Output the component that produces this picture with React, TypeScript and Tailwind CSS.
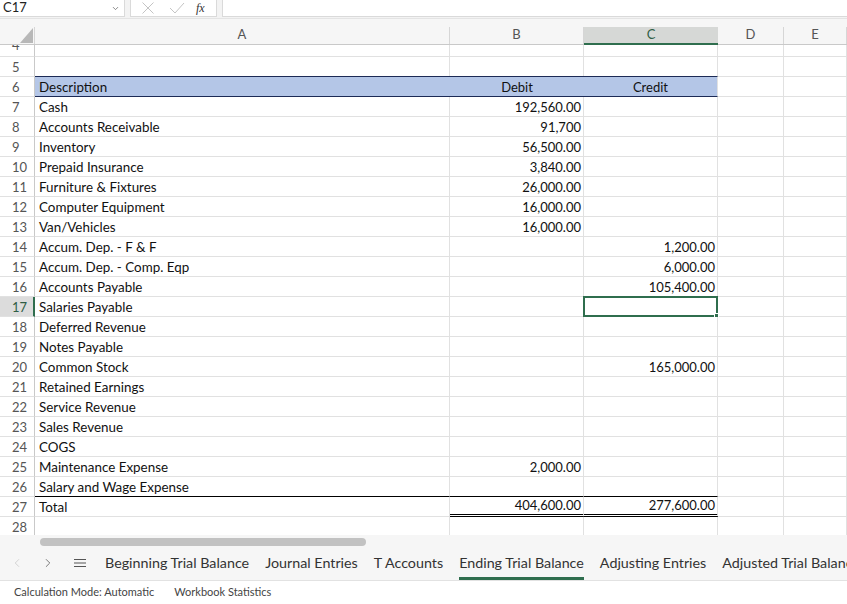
import { ChevronDown, ChevronLeft, ChevronRight } from "lucide-react";

type Row = { n: number; a?: string; b?: string; c?: string };

const rows: Row[] = [
  { n: 7, a: "Cash", b: "192,560.00" },
  { n: 8, a: "Accounts Receivable", b: "91,700" },
  { n: 9, a: "Inventory", b: "56,500.00" },
  { n: 10, a: "Prepaid Insurance", b: "3,840.00" },
  { n: 11, a: "Furniture & Fixtures", b: "26,000.00" },
  { n: 12, a: "Computer Equipment", b: "16,000.00" },
  { n: 13, a: "Van/Vehicles", b: "16,000.00" },
  { n: 14, a: "Accum. Dep. - F & F", c: "1,200.00" },
  { n: 15, a: "Accum. Dep. - Comp. Eqp", c: "6,000.00" },
  { n: 16, a: "Accounts Payable", c: "105,400.00" },
  { n: 17, a: "Salaries Payable" },
  { n: 18, a: "Deferred Revenue" },
  { n: 19, a: "Notes Payable" },
  { n: 20, a: "Common Stock", c: "165,000.00" },
  { n: 21, a: "Retained Earnings" },
  { n: 22, a: "Service Revenue" },
  { n: 23, a: "Sales Revenue" },
  { n: 24, a: "COGS" },
  { n: 25, a: "Maintenance Expense", b: "2,000.00" },
  { n: 26, a: "Salary and Wage Expense" },
];

const tabs = [
  "Beginning Trial Balance",
  "Journal Entries",
  "T Accounts",
  "Ending Trial Balance",
  "Adjusting Entries",
  "Adjusted Trial Balance",
];

const grid = "border-r border-b border-[#e1e1e1]";

function RowHead({ n, active }: { n: number; active?: boolean }) {
  return (
    <div
      className={
        "w-[35px] shrink-0 flex items-center pt-[2px] pl-[12px] text-[13px] border-b border-[#e1e1e1] " +
        (active
          ? "bg-[#dcdcdc] text-[#2f5d45] border-r-2 border-r-[#2f6e4e]"
          : "text-[#555] border-r border-r-[#c9c9c9]")
      }
    >
      {n}
    </div>
  );
}

function DataRow({ r }: { r: Row }) {
  const sel = r.n === 17;
  const last = r.n === 26;
  const under = last ? "border-b-black" : "";
  return (
    <div className="flex h-[20px] shrink-0">
      <RowHead n={r.n} active={sel} />
      <div className={`w-[415px] shrink-0 pl-[4px] pt-[2px] flex items-center text-[13.4px] ${grid} ${under}`}>{r.a}</div>
      <div className={`w-[134px] shrink-0 pr-[2px] pt-[2px] flex items-center justify-end ${grid} ${under}`}>{r.b}</div>
      <div className={`relative w-[134px] shrink-0 pr-[2px] pt-[2px] flex items-center justify-end ${grid} ${under}`}>
        {r.c}
        {sel && (
          <div className="absolute -left-px -top-px w-[135px] h-[21px] border-2 border-[#2f6e4e]">
            <div className="absolute -right-[3px] -bottom-[3px] w-[5px] h-[5px] bg-[#2f6e4e] border border-white" />
          </div>
        )}
      </div>
      <div className={`w-[66px] shrink-0 ${grid}`} />
      <div className={`flex-1 ${grid}`} />
    </div>
  );
}

export default function App() {
  return (
    <div
      className="w-[847px] h-[604px] overflow-hidden bg-white text-[13px] text-[#111] flex flex-col"
      style={{ fontFamily: "Lato, 'Noto Sans', sans-serif" }}
    >
      {/* formula bar */}
      <div className="flex h-[19px] shrink-0 bg-[#f3f3f3] border-b border-[#e4e4e4]">
        <div className="w-[125px] shrink-0 h-[17px] bg-white border-r border-b border-[#dadada] flex items-center pl-[3px] pr-[4px] text-[13px] text-[#222]">
          <span className="flex-1">C17</span>
          <ChevronDown size={9} strokeWidth={2} className="text-[#666]" />
        </div>
        <div className="ml-[5px] w-[87px] shrink-0 h-[17px] bg-white border-x border-b border-[#dadada] flex items-center text-[#c4c4c4]">
          <svg width="14" height="14" viewBox="0 0 14 14" className="ml-[10px]" stroke="currentColor" strokeWidth="1" fill="none">
            <path d="M1.5 1.5 L12.5 12.5 M12.5 1.5 L1.5 12.5" />
          </svg>
          <svg width="16" height="14" viewBox="0 0 16 14" className="ml-[14px]" stroke="currentColor" strokeWidth="1" fill="none">
            <path d="M1 7 L6 12 L15 2" />
          </svg>
          <span className="ml-[11px] italic text-[12px] text-[#333]" style={{ fontFamily: "'Liberation Serif', serif" }}>
            fx
          </span>
        </div>
        <div className="ml-[5px] flex-1 h-[17px] bg-white border-l border-b border-[#dadada]" />
      </div>
      {/* spacer strip */}
      <div className="h-[8px] shrink-0 bg-[#f6f6f6]" />
      {/* column headers */}
      <div className="flex h-[18px] shrink-0 bg-[#f6f6f6] text-[13px] text-[#555] border-b border-[#c9c9c9]">
        <div className="w-[35px] shrink-0 relative border-r border-[#d6d6d6]">
          <svg width="13" height="15" viewBox="0 0 13 15" className="absolute right-[1px] top-[1px]">
            <path d="M13 0 L13 15 L0 15 Z" fill="#b8b8b8" />
          </svg>
        </div>
        <div className="w-[415px] shrink-0 flex items-center justify-center pb-[1px] border-r border-[#d6d6d6]">A</div>
        <div className="w-[134px] shrink-0 flex items-center justify-center pb-[1px] border-r border-[#d6d6d6]">B</div>
        <div className="w-[134px] shrink-0 flex items-center justify-center pb-[1px] bg-[#d6d8d6] text-[#2f5d45] border-b-2 border-[#2f6e4e] -mb-px">
          C
        </div>
        <div className="w-[66px] shrink-0 flex items-center justify-center pb-[1px] border-r border-[#d6d6d6]">D</div>
        <div className="flex-1 flex items-center justify-center pb-[1px] border-r border-[#d6d6d6]">E</div>
      </div>

      {/* grid */}
      <div className="shrink-0 h-[490px] overflow-hidden flex flex-col">
        {/* row 4, scrolled partly out of view */}
        <div className="flex h-[12px] shrink-0 overflow-hidden">
          <div className="w-[35px] shrink-0 border-r border-b border-r-[#c9c9c9] border-b-[#e1e1e1] overflow-hidden">
            <div className="h-[20px] -mt-[9px] pl-[12px] flex items-center text-[#555]">4</div>
          </div>
          <div className={`w-[415px] shrink-0 ${grid}`} />
          <div className={`w-[134px] shrink-0 ${grid}`} />
          <div className={`w-[134px] shrink-0 ${grid}`} />
          <div className={`w-[66px] shrink-0 ${grid}`} />
          <div className={`flex-1 ${grid}`} />
        </div>
        {/* row 5 */}
        <div className="flex h-[20px] shrink-0">
          <RowHead n={5} />
          <div className="w-[415px] shrink-0 border-r border-[#e1e1e1]" />
          <div className="w-[134px] shrink-0 border-r border-[#e1e1e1]" />
          <div className="w-[134px] shrink-0 border-r border-[#e1e1e1]" />
          <div className={`w-[66px] shrink-0 ${grid}`} />
          <div className={`flex-1 ${grid}`} />
        </div>
        {/* row 6: heading */}
        <div className="flex h-[20px] shrink-0">
          <RowHead n={6} />
          <div className="w-[549px] shrink-0 flex bg-[#b4c6e7] border-y border-[#1c2a55] -mt-px h-[21px]">
            <div className="w-[415px] pl-[4px] pt-[2px] flex items-center text-[13.4px]">Description</div>
            <div className="w-[134px] pt-[2px] flex items-center justify-center">Debit</div>
          </div>
          <div className="w-[134px] shrink-0 pt-[2px] flex items-center justify-center bg-[#b4c6e7] border-y border-r border-[#1c2a55] border-r-[#e1e1e1] -mt-px h-[21px]">
            Credit
          </div>
          <div className={`w-[66px] shrink-0 ${grid}`} />
          <div className={`flex-1 ${grid}`} />
        </div>
        {rows.map((r) => (
          <DataRow key={r.n} r={r} />
        ))}
        {/* row 27: totals */}
        <div className="flex h-[20px] shrink-0">
          <RowHead n={27} />
          <div className={`w-[415px] shrink-0 pl-[4px] pt-[2px] flex items-center text-[13.4px] ${grid}`}>Total</div>
          <div className="w-[134px] shrink-0 pr-[2px] pt-[1px] flex items-center justify-end border-r border-r-[#e1e1e1] border-b-[3px] border-double border-b-black">
            404,600.00
          </div>
          <div className="w-[134px] shrink-0 pr-[2px] pt-[1px] flex items-center justify-end border-r border-r-[#e1e1e1] border-b-[3px] border-double border-b-black">
            277,600.00
          </div>
          <div className={`w-[66px] shrink-0 ${grid}`} />
          <div className={`flex-1 ${grid}`} />
        </div>
        {/* row 28 */}
        <div className="flex h-[18px] shrink-0">
          <div className="w-[35px] shrink-0 flex items-center pt-[4px] pl-[12px] text-[#555] border-r border-[#c9c9c9]">28</div>
          <div className="w-[415px] shrink-0 border-r border-[#e1e1e1]" />
          <div className="w-[134px] shrink-0 border-r border-[#e1e1e1]" />
          <div className="w-[134px] shrink-0 border-r border-[#e1e1e1]" />
          <div className="w-[66px] shrink-0 border-r border-[#e1e1e1]" />
          <div className="flex-1 border-r border-[#e1e1e1]" />
        </div>
      </div>

      {/* horizontal scrollbar */}
      <div className="h-[13px] shrink-0 bg-[#f6f6f6] pt-[3px] pl-[40px]">
        <div className="w-[326px] h-[8px] rounded-full bg-[#c2c2c2]" />
      </div>

      {/* sheet tabs */}
      <div className="h-[33px] shrink-0 bg-[#f6f6f6] border-b border-[#e2e2e2] flex items-stretch text-[14.3px] text-[#333] whitespace-nowrap overflow-hidden">
        <div className="w-[32px] shrink-0 flex items-center justify-center pl-[2px] pb-[2px] text-[#c8c8c8]">
          <ChevronLeft size={14} strokeWidth={1.3} />
        </div>
        <div className="w-[32px] shrink-0 flex items-center justify-center pb-[2px] text-[#555]">
          <ChevronRight size={14} strokeWidth={1.3} />
        </div>
        <div className="w-[32px] shrink-0 flex items-center justify-center pb-[2px] text-[#555]">
          <svg width="12" height="10" viewBox="0 0 12 10" stroke="currentColor" strokeWidth="1">
            <path d="M0 1.5 H12 M0 5 H12 M0 8.5 H12" />
          </svg>
        </div>
        <div className="flex items-stretch shrink-0 ml-[1px]">
          {tabs.map((t) => {
            const active = t === "Ending Trial Balance";
            return (
              <div key={t} className="relative shrink-0 px-[8px] pb-[3px] flex items-center">
                <span>{t}</span>
                {active && <div className="absolute left-[8px] right-[8px] bottom-0 h-[3px] bg-[#2f6e4e]" />}
              </div>
            );
          })}
        </div>
      </div>

      {/* status bar */}
      <div className="flex-1 flex items-center pl-[14px] text-[11px] text-[#444] gap-[20px]">
        <span>Calculation Mode: Automatic</span>
        <span>Workbook Statistics</span>
      </div>
    </div>
  );
}
